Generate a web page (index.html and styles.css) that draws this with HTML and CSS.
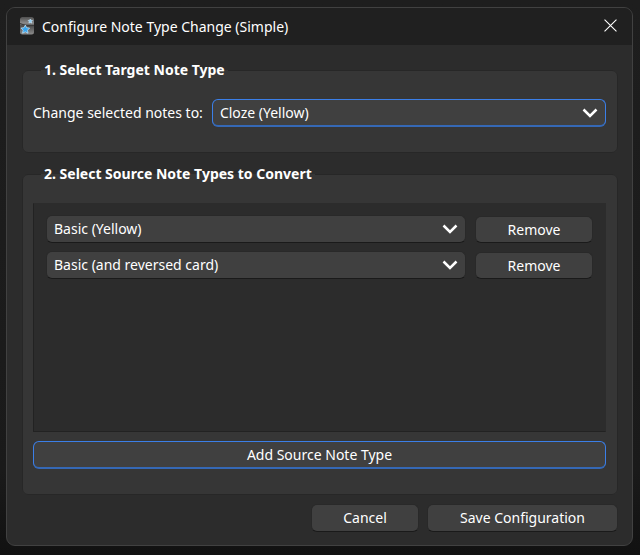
FILE: index.html
```html
<!DOCTYPE html>
<html lang="en">
<head>
<meta charset="utf-8">
<title>Configure Note Type Change (Simple)</title>
<link rel="stylesheet" href="styles.css">
</head>
<body>
<main class="dialog" role="dialog" aria-labelledby="dialog-title">
  <header class="titlebar">
    <svg class="app-icon" viewBox="0 0 16 20" aria-hidden="true">
      <defs>
        <linearGradient id="card" x1="0" y1="0" x2="0" y2="1">
          <stop offset="0" stop-color="#505050"/>
          <stop offset=".35" stop-color="#8c8c8c"/>
          <stop offset=".5" stop-color="#4c4c4c"/>
          <stop offset="1" stop-color="#8c8c8c"/>
        </linearGradient>
      </defs>
      <rect x="1" y="1" width="14" height="17.500" rx="2.500" fill="url(#card)"/>
      <path d="M1 7.500Q7 11 15 9.500" fill="none" stroke="#383838" stroke-width="1"/>
      <path d="M6.300 9l1.300 2.700 3 .4-2.100 2.100.5 3-2.700-1.400-2.700 1.400.5-3L2 12.100l3-.4z" fill="#36a5ef" stroke="#b9def6" stroke-width=".8" stroke-linejoin="round"/>
      <path d="M11.300 3l.7 1.300 1.500.2-1.100 1.100.3 1.500-1.400-.7-1.400.7.3-1.500-1.100-1.100 1.500-.2z" fill="#8dcdf5" stroke="#c7e6fa" stroke-width=".6"/>
    </svg>
    <h1 class="title" id="dialog-title">Configure Note Type Change (Simple)</h1>
    <button class="close" type="button" aria-label="Close">
      <svg viewBox="0 0 12 12" aria-hidden="true"><path d="M.5.5l11 11M11.500.5l-11 11"/></svg>
    </button>
  </header>
  <form class="content">
    <fieldset class="group">
      <legend>1. Select Target Note Type</legend>
      <div class="target">
        <label for="target">Change selected notes to:</label>
        <div class="combo">
          <select id="target" class="focused"><option>Cloze (Yellow)</option></select>
          <svg viewBox="0 0 16 10" aria-hidden="true"><path d="M1.500 1.500L8 8l6.500-6.500"/></svg>
        </div>
      </div>
    </fieldset>
    <fieldset class="group sources">
      <legend>2. Select Source Note Types to Convert</legend>
      <ul class="list">
        <li class="row">
          <div class="combo">
            <select aria-label="Source note type 1"><option>Basic (Yellow)</option></select>
            <svg viewBox="0 0 16 10" aria-hidden="true"><path d="M1.500 1.500L8 8l6.500-6.500"/></svg>
          </div>
          <button class="button remove" type="button">Remove</button>
        </li>
        <li class="row">
          <div class="combo">
            <select aria-label="Source note type 2"><option>Basic (and reversed card)</option></select>
            <svg viewBox="0 0 16 10" aria-hidden="true"><path d="M1.500 1.500L8 8l6.500-6.500"/></svg>
          </div>
          <button class="button remove" type="button">Remove</button>
        </li>
      </ul>
      <button class="button add focused" type="button">Add Source Note Type</button>
    </fieldset>
    <footer class="actions">
      <button class="button cancel" type="button">Cancel</button>
      <button class="button save" type="submit">Save Configuration</button>
    </footer>
  </form>
</main>
</body>
</html>
```
FILE: styles.css
```css
* {
  box-sizing: border-box;
}

body {
  margin: 0;
  min-height: 100vh;
  padding: 7px 7px 9px 6px;
  display: flex;
  background: linear-gradient(#1e1e1e, #1a1a1a 85%, #111);
  color: #fff;
  font: 14px/20px "Noto Sans", "Open Sans", sans-serif;
}

.dialog {
  flex: 1;
  display: flex;
  flex-direction: column;
  border: 1px solid #414141;
  border-radius: 9px;
  background: #2c2c2c;
  overflow: hidden;
}

.titlebar {
  height: 37px;
  flex: none;
  display: flex;
  align-items: center;
  gap: 7px;
  padding: 0 15px 2px 12px;
  background: #202020;
}

.app-icon {
  width: 16px;
  height: 20px;
}

.title {
  flex: 1;
  margin: 0;
  padding-top: 2px;
  font-size: 14px;
  font-weight: 400;
}

.close {
  display: flex;
  padding: 0;
  border: 0;
  background: none;
}

.close svg {
  width: 13px;
  height: 13px;
  fill: none;
  stroke: #fff;
  stroke-width: 1;
}

.content {
  flex: 1;
  display: flex;
  flex-direction: column;
  padding: 15px 14px 13px 15px;
}

.group {
  min-width: 0;
  margin: 0 0 11px;
  padding: 19px 11px 25px 10px;
  border: 1px solid #272727;
  border-radius: 6px;
  background: #363636;
}

.group legend {
  margin-left: 8px;
  padding: 0 3px;
  font-weight: 700;
}

.target {
  display: flex;
  align-items: center;
  gap: 9px;
}

.combo {
  position: relative;
  flex: 1;
}

.combo svg {
  position: absolute;
  top: 9px;
  right: 8px;
  width: 16px;
  height: 10px;
  fill: none;
  stroke: #fff;
  stroke-width: 2.5;
  pointer-events: none;
}

select,
.button {
  display: block;
  height: 28px;
  border: 1px solid #292929;
  border-bottom-color: #1a1a1a;
  border-radius: 6px;
  background: #404040;
  color: #fff;
  font: inherit;
}

select {
  width: 100%;
  padding: 0 32px 0 7px;
  appearance: none;
}

.button {
  padding: 0 8px;
}

select.focused,
.button.focused {
  border: 1px solid #3b7fe8;
  border-bottom-width: 2px;
  border-bottom-color: #3568b5;
}

.sources {
  flex: 1;
  display: flex;
  flex-direction: column;
  margin-bottom: 9px;
}

.list {
  flex: 1;
  margin: 0 0 9px;
  padding: 11px 12px;
  display: flex;
  flex-direction: column;
  gap: 8px;
  border: 1px solid #222;
  border-top-color: #2c2c2c;
  border-right-color: #2c2c2c;
  background: #2c2c2c;
  list-style: none;
}

.row {
  display: flex;
  align-items: flex-end;
  gap: 9px;
}

.remove {
  width: 118px;
  height: 27px;
}

.actions {
  display: flex;
  justify-content: flex-end;
  gap: 8px;
}

.cancel {
  width: 108px;
}

.save {
  width: 191px;
}
```
